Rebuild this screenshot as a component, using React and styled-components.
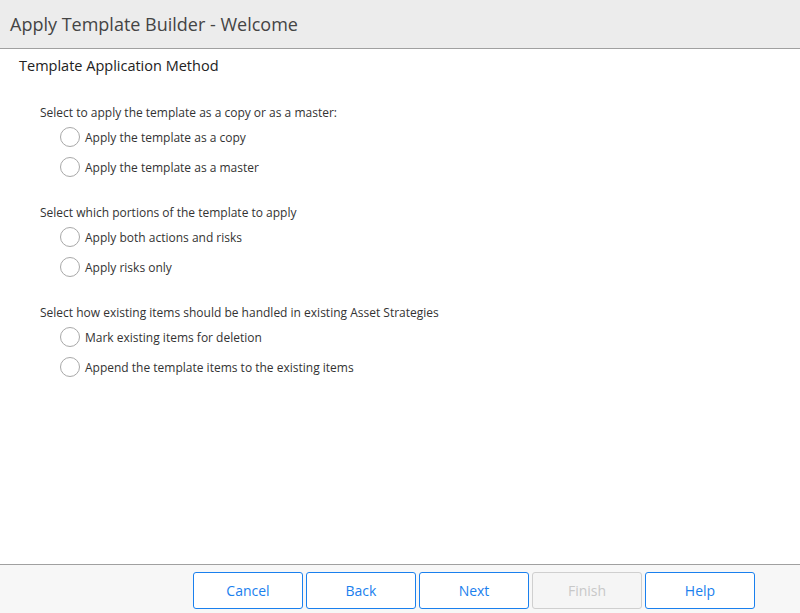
import React, { useState } from 'react'
import styled, { createGlobalStyle } from 'styled-components'

const GlobalStyle = createGlobalStyle`
  html, body {
    margin: 0;
    padding: 0;
    height: 100%;
  }
  body {
    font-family: "Open Sans", "Noto Sans", sans-serif;
    color: #333;
    background: #fff;
  }
  #root {
    height: 100%;
  }
`

const groups = [
  {
    key: 'method',
    label: 'Select to apply the template as a copy or as a master:',
    options: ['Apply the template as a copy', 'Apply the template as a master'],
  },
  {
    key: 'portions',
    label: 'Select which portions of the template to apply',
    options: ['Apply both actions and risks', 'Apply risks only'],
  },
  {
    key: 'existing',
    label: 'Select how existing items should be handled in existing Asset Strategies',
    options: ['Mark existing items for deletion', 'Append the template items to the existing items'],
  },
]

const buttons = [
  { label: 'Cancel' },
  { label: 'Back' },
  { label: 'Next' },
  { label: 'Finish', disabled: true },
  { label: 'Help' },
]

const App = () => {
  const [values, setValues] = useState({})

  const pick = (group, option) => {
    setValues((prev) => ({ ...prev, [group]: option }))
  }

  return (
    <>
      <GlobalStyle />
      <Dialog>
        <Header>
          <Title>Apply Template Builder - Welcome</Title>
        </Header>
        <Body>
          <SectionTitle>Template Application Method</SectionTitle>
          {groups.map((g) => (
            <Group key={g.key}>
              <GroupLabel>{g.label}</GroupLabel>
              {g.options.map((opt) => (
                <RadioRow key={opt} onClick={() => pick(g.key, opt)}>
                  <RadioCircle $checked={values[g.key] === opt} />
                  <RadioText>{opt}</RadioText>
                </RadioRow>
              ))}
            </Group>
          ))}
        </Body>
        <Footer>
          {buttons.map((b) => (
            <Button key={b.label} disabled={b.disabled}>{b.label}</Button>
          ))}
        </Footer>
      </Dialog>
    </>
  )
}

export default App

const Dialog = styled.div`
  display: flex;
  flex-direction: column;
  height: 100vh;
`

const Header = styled.div`
  display: flex;
  align-items: center;
  box-sizing: border-box;
  height: 49px;
  padding: 0 10px;
  background: #ececec;
  border-bottom: 1px solid #a0a0a0;
  flex-shrink: 0;
`

const Title = styled.div`
  font-size: 18px;
  color: #444;
`

const Body = styled.div`
  flex: 1;
  padding: 7px 19px 0;
`

const SectionTitle = styled.div`
  font-size: 14.5px;
  color: #222;
  line-height: 20px;
  margin-bottom: 27px;
`

const Group = styled.div`
  padding-left: 21px;
  margin-bottom: 21px;
`

const GroupLabel = styled.div`
  font-size: 12px;
  line-height: 20px;
  color: #333;
  margin-bottom: -1px;
`

const RadioRow = styled.div`
  display: flex;
  align-items: center;
  height: 30px;
  padding-left: 20px;
  cursor: pointer;
`

const RadioCircle = styled.span`
  box-sizing: border-box;
  width: 20px;
  height: 20px;
  border-radius: 50%;
  border: 1px solid #a8a8a8;
  background: #fff;
  margin-right: 5px;
  flex-shrink: 0;
  box-shadow: ${(p) => (p.$checked ? 'inset 0 0 0 5px #fff, inset 0 0 0 10px #1a7fe6' : 'none')};
`

const RadioText = styled.span`
  font-size: 12px;
  color: #333;
`

const Footer = styled.div`
  display: flex;
  justify-content: flex-end;
  gap: 3px;
  height: 49px;
  padding: 7px 45px 0 0;
  box-sizing: border-box;
  background: #f7f7f7;
  border-top: 1px solid #a0a0a0;
  flex-shrink: 0;
`

const Button = styled.button`
  box-sizing: border-box;
  width: 110px;
  height: 37px;
  font-family: "Open Sans", "Noto Sans", sans-serif;
  font-size: 14px;
  color: ${(p) => (p.disabled ? '#c8c8c8' : '#1a80ee')};
  background: ${(p) => (p.disabled ? '#f5f5f5' : '#fff')};
  border: 1px solid ${(p) => (p.disabled ? '#cfcfcf' : '#1a80ee')};
  border-radius: 3px;
  cursor: ${(p) => (p.disabled ? 'default' : 'pointer')};
`
